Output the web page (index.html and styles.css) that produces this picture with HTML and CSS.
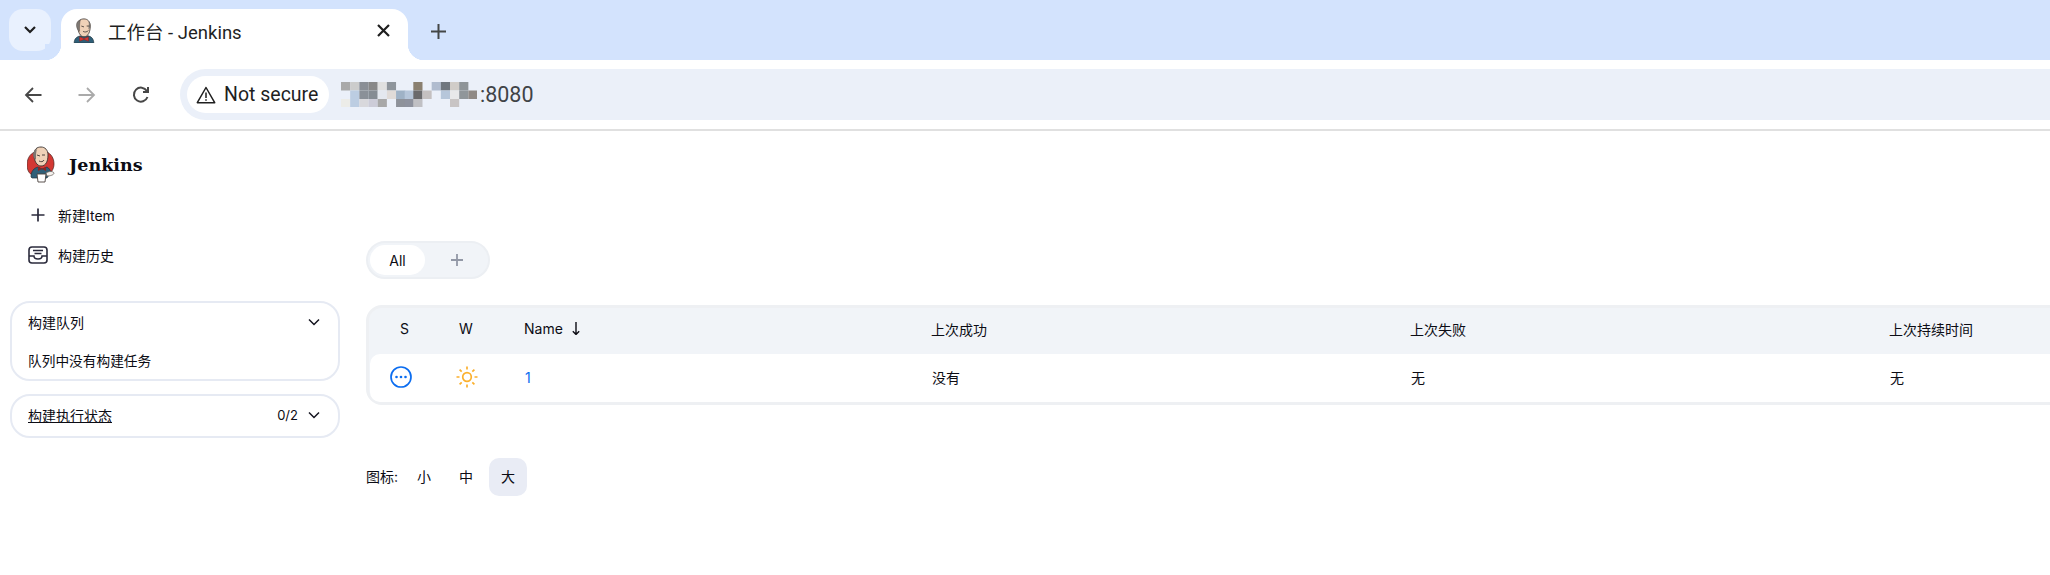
FILE: index.html
```html
<!DOCTYPE html>
<html lang="zh">
<head>
<meta charset="utf-8">
<title>工作台 - Jenkins</title>
<link rel="stylesheet" href="styles.css">
</head>
<body>
<svg class="defs" width="0" height="0" aria-hidden="true">
  <symbol id="butler-head" viewBox="0 0 24 28">
    <path d="M1 28c0-4 2-7 7-8l4 1 5-1c4 1 6 4 6 8z" fill="#2f5f78" stroke="#24343c" stroke-width=".7"/>
    <path d="M5 9C5 3 8 1 12 1c4 0 7 3 7 8 0 6-2 12-7 12-4 0-7-5-7-12z" fill="#f0d2b8" stroke="#3b3330" stroke-width=".9"/>
    <path d="M5 13C2 8 4 3 8 2c-1 3-1 8-1 13z" fill="#7d7873" stroke="#3b3330" stroke-width=".4"/>
    <path d="M19 11c1-3 0-6-2-7 1 3 0 6 0 9z" fill="#7d7873"/>
    <path d="M9 9l3 1M15 9l3 0M11 15c2 1 4 1 6-1" fill="none" stroke="#3b3330" stroke-width=".9"/>
    <path d="M7 21l5 2 5-2v5l-5-2-5 2z" fill="#d33833" stroke="#7b1e1a" stroke-width=".5"/>
  </symbol>
  <symbol id="butler-full" viewBox="0 0 28 37">
    <path d="M8 6C2 8 0 14 0 19c0 6 3 10 8 11h10c6-2 9-7 9-12C27 12 24 8 20 6z" fill="#d33833" stroke="#49231f" stroke-width=".7"/>
    <path d="M4 31c0-6 3-9 7-10l4 2 5-2c2 1 3 3 4 5l-4 6H5z" fill="#2f5f78" stroke="#24343c" stroke-width=".7"/>
    <path d="M7 9c0-6 3-8 7-8 4 0 7 3 7 8 0 6-2 11-7 11-4 0-7-5-7-11z" fill="#f0d2b8" stroke="#3b3330" stroke-width=".9"/>
    <path d="M7 12C5 8 7 4 10 3c-1 3-1 6-1 11z" fill="#7d7873"/>
    <path d="M10 9l3 1M15 9l3 0M12 15c2 1 4 1 5-1" fill="none" stroke="#3b3330" stroke-width=".9"/>
    <path d="M11 21l4 2 4-2v4l-4-2-4 2z" fill="#8e2522"/>
    <path d="M10 28h9l-1 8h-7z" fill="#fff" stroke="#49413d" stroke-width=".9"/>
    <path d="M19 27c3-2 7-2 8 0 0 2-4 3-7 3z" fill="#f4f1ee" stroke="#6b6560" stroke-width=".8"/>
  </symbol>
</svg>

<div class="strip">
  <button class="tab-search" aria-label="Search tabs">
    <svg width="14" height="10" viewBox="0 0 14 10"><path d="M2 2l5 5 5-5" fill="none" stroke="#1f1f1f" stroke-width="2.200"/></svg>
  </button>
  <div class="tab">
    <svg class="favicon" width="22" height="25"><use href="#butler-head"/></svg>
    <span class="tab-title">工作台 - Jenkins</span>
    <svg class="tab-close" width="13" height="13" viewBox="0 0 13 13"><path d="M1 1l11 11M12 1L1 12" stroke="#1f1f1f" stroke-width="2.200"/></svg>
  </div>
  <svg class="new-tab" width="15" height="15" viewBox="0 0 15 15"><path d="M7.500 0v15M0 7.500h15" stroke="#444746" stroke-width="2"/></svg>
</div>

<div class="toolbar">
  <svg class="nav-btn" width="18" height="18" viewBox="0 0 18 18"><path d="M17.500 9H2M9 2L2 9l7 7" fill="none" stroke="#474747" stroke-width="1.800"/></svg>
  <svg class="nav-btn" width="18" height="18" viewBox="0 0 18 18"><path d="M.5 9H16M9 2l7 7-7 7" fill="none" stroke="#aaaaaa" stroke-width="1.800"/></svg>
  <svg class="nav-btn" width="18" height="18" viewBox="0 0 18 18"><path d="M15.500 11a7 7 0 1 1-.6-6M16 1v5h-5" fill="none" stroke="#474747" stroke-width="2"/></svg>
  <div class="omnibox">
    <div class="security">
      <svg width="20" height="18" viewBox="0 0 20 18"><path d="M10 1.500L1.300 16.700h17.400z" fill="none" stroke="#1f1f1f" stroke-width="1.500" stroke-linejoin="round"/><path d="M10 6.500v5.500M10 13.200v1.600" stroke="#1f1f1f" stroke-width="1.500"/></svg>
      <span>Not secure</span>
    </div>
    <svg class="blur" width="136" height="25" viewBox="0 0 126 25" preserveAspectRatio="none" aria-hidden="true">
      <g>
        <rect x="0" y="0" width="8.500" height="8.500" fill="#a9a9a9"/><rect x="8.500" y="0" width="8.500" height="8.500" fill="#cccccc"/><rect x="17" y="0" width="8.500" height="8.500" fill="#8a8f96"/><rect x="25.500" y="0" width="8.500" height="8.500" fill="#888888"/><rect x="34" y="0" width="8.500" height="8.500" fill="#e0e0e0"/><rect x="42.500" y="0" width="8.500" height="8.500" fill="#8e959c"/><rect x="67" y="0" width="8.500" height="8.500" fill="#8a8070"/><rect x="84" y="0" width="8.500" height="8.500" fill="#b0bccf"/><rect x="92.500" y="0" width="8.500" height="8.500" fill="#70777f"/><rect x="101" y="0" width="8.500" height="8.500" fill="#d0ccc8"/><rect x="109.500" y="0" width="8.500" height="8.500" fill="#8e9498"/>
        <rect x="8.500" y="8.500" width="8.500" height="8.500" fill="#bccde2"/><rect x="17" y="8.500" width="8.500" height="8.500" fill="#8a9098"/><rect x="25.500" y="8.500" width="8.500" height="8.500" fill="#858c93"/><rect x="34" y="8.500" width="8.500" height="8.500" fill="#e4e8ef"/><rect x="42.500" y="8.500" width="8.500" height="8.500" fill="#e0dbd8"/><rect x="51" y="8.500" width="8.500" height="8.500" fill="#9fb2c6"/><rect x="59" y="8.500" width="8.500" height="8.500" fill="#b6c6da"/><rect x="67" y="8.500" width="8.500" height="8.500" fill="#6a6a6c"/><rect x="75.500" y="8.500" width="8.500" height="8.500" fill="#c4c0c0"/><rect x="92.500" y="8.500" width="8.500" height="8.500" fill="#b6c6da"/><rect x="101" y="8.500" width="8.500" height="8.500" fill="#e8e8ea"/><rect x="109.500" y="8.500" width="8.500" height="8.500" fill="#90969a"/><rect x="118" y="8.500" width="8" height="8.500" fill="#908a86"/>
        <rect x="0" y="17" width="8.500" height="8" fill="#ecece8"/><rect x="8.500" y="17" width="8.500" height="8" fill="#bccde2"/><rect x="17" y="17" width="8.500" height="8" fill="#d8d8dc"/><rect x="25.500" y="17" width="8.500" height="8" fill="#ccccd8"/><rect x="34" y="17" width="8.500" height="8" fill="#a8a8a8"/><rect x="51" y="17" width="8.500" height="8" fill="#8e929a"/><rect x="59" y="17" width="8.500" height="8" fill="#8e929e"/><rect x="67" y="17" width="8.500" height="8" fill="#c0c0c4"/><rect x="101" y="17" width="8.500" height="8" fill="#c8c4c4"/>
      </g>
    </svg>
    <span class="port">:8080</span>
  </div>
</div>

<div class="page">
  <aside class="sidebar">
    <div class="brand">
      <svg width="28" height="37"><use href="#butler-full"/></svg>
      <span class="brand-name">Jenkins</span>
    </div>
    <nav class="tasks">
      <a class="task">
        <span class="task-icon"><svg width="16" height="16" viewBox="0 0 16 16"><path d="M8 1.500v13M1.500 8h13" stroke="#2b2b3c" stroke-width="1.700"/></svg></span>
        <span>新建Item</span>
      </a>
      <a class="task">
        <span class="task-icon"><svg width="20" height="18" viewBox="0 0 20 18"><rect x="1" y="1" width="18" height="16" rx="3" fill="none" stroke="#2b2b3c" stroke-width="1.600"/><path d="M1 10h5c0 2 1.500 3 4 3s4-1 4-3h5M5 4.500h10M6.500 7.500h7" fill="none" stroke="#2b2b3c" stroke-width="1.500"/></svg></span>
        <span>构建历史</span>
      </a>
    </nav>
    <section class="pane pane-queue">
      <div class="pane-head">
        <span>构建队列</span>
        <svg class="chev" width="12" height="8" viewBox="0 0 12 8"><path d="M1 1.500l5 5 5-5" fill="none" stroke="#14141f" stroke-width="1.500"/></svg>
      </div>
      <div class="pane-body">队列中没有构建任务</div>
    </section>
    <section class="pane pane-exec">
      <div class="pane-head">
        <a class="pane-link">构建执行状态</a>
        <span class="count">0/2</span>
        <svg class="chev" width="12" height="8" viewBox="0 0 12 8"><path d="M1 1.500l5 5 5-5" fill="none" stroke="#14141f" stroke-width="1.500"/></svg>
      </div>
    </section>
  </aside>

  <main class="main">
    <div class="view-tabs">
      <span class="view-tab active">All</span>
      <span class="view-add"><svg width="12" height="12" viewBox="0 0 12 12"><path d="M6 0v12M0 6h12" stroke="#9298a6" stroke-width="1.800"/></svg></span>
    </div>

    <div class="jobs">
      <div class="jobs-head">
        <span class="cell center head-s">S</span>
        <span class="cell center">W</span>
        <span class="cell pad name-head">Name <svg class="arrow" width="8" height="13" viewBox="0 0 8 13"><path d="M4 0v12.500M.8 9.300L4 12.500l3.200-3.200" fill="none" stroke="#0c0c14" stroke-width="1.400"/></svg></span>
        <span class="cell pad">上次成功</span>
        <span class="cell pad">上次失败</span>
        <span class="cell pad">上次持续时间</span>
      </div>
      <div class="jobs-row">
        <span class="cell center">
          <svg class="status" width="22" height="22" viewBox="0 0 22 22"><circle cx="11" cy="11" r="10" fill="none" stroke="#0b6df0" stroke-width="1.700"/><circle cx="6.500" cy="11" r="1.300" fill="#0b6df0"/><circle cx="11" cy="11" r="1.300" fill="#0b6df0"/><circle cx="15.500" cy="11" r="1.300" fill="#0b6df0"/></svg>
        </span>
        <span class="cell center">
          <svg width="22" height="22" viewBox="0 0 22 22"><circle cx="11" cy="11" r="4.300" fill="none" stroke="#fbb02d" stroke-width="1.700"/><path d="M11 .5v3M11 18.500v3M.5 11h3M18.500 11h3M3.600 3.600l2.100 2.100M16.300 16.300l2.100 2.100M3.600 18.400l2.100-2.100M16.300 5.700l2.100-2.100" stroke="#fbb02d" stroke-width="1.700"/></svg>
        </span>
        <a class="cell pad job-link">1</a>
        <span class="cell pad">没有</span>
        <span class="cell pad">无</span>
        <span class="cell pad">无</span>
      </div>
    </div>

    <div class="sizes">
      <span class="sizes-label">图标:</span>
      <span class="size">小</span>
      <span class="size">中</span>
      <span class="size active">大</span>
    </div>
  </main>
</div>
</body>
</html>
```

FILE: styles.css
```css
* { box-sizing: border-box; }

html, body {
  margin: 0;
  height: 575px;
  overflow: hidden;
  background: #fff;
  font-family: "Inter", "Noto Sans CJK SC", sans-serif;
  color: #0c0c14;
}

.defs { position: absolute; }

/* browser chrome */
.strip {
  display: flex;
  align-items: flex-start;
  height: 60px;
  padding: 9px 0 0 9px;
  background: #d3e3fd;
}

.tab-search {
  display: flex;
  align-items: center;
  justify-content: center;
  flex: none;
  width: 42px;
  height: 42px;
  padding: 0;
  border: 0;
  border-radius: 14px;
  background: #e9f1fe;
}

.tab {
  position: relative;
  display: flex;
  align-items: center;
  flex: none;
  width: 347px;
  height: 51px;
  margin-left: 10px;
  padding: 0 18px 8px 12px;
  border-radius: 16px 16px 0 0;
  background: #fff;
  font-family: "Roboto", "Noto Sans CJK SC", sans-serif;
  font-size: 18.500px;
  color: #1f1f1f;
}

.tab::before,
.tab::after {
  content: "";
  position: absolute;
  bottom: 0;
  width: 16px;
  height: 16px;
}

.tab::before {
  left: -16px;
  background: radial-gradient(circle at 0 0, #d3e3fd 16px, #fff 16.500px);
}

.tab::after {
  right: -16px;
  background: radial-gradient(circle at 100% 0, #d3e3fd 16px, #fff 16.500px);
}

.favicon { flex: none; }

.tab-title {
  flex: 1;
  margin-left: 13px;
}

.new-tab { margin: 15px 0 0 23px; }

.toolbar {
  display: flex;
  align-items: center;
  height: 69px;
  padding: 0 0 0 24px;
  overflow: hidden;
  background: #fff;
}

.nav-btn {
  flex: none;
  margin-right: 36px;
}

.omnibox {
  display: flex;
  flex: 1;
  align-items: center;
  height: 51px;
  margin: 0 -40px 0 -6px;
  padding-left: 7px;
  border-radius: 26px;
  background: #ebf0f9;
  font-family: "Roboto", "Noto Sans CJK SC", sans-serif;
  font-size: 19.500px;
  color: #1f1f1f;
}

.security {
  display: flex;
  align-items: center;
  gap: 8px;
  width: 142px;
  height: 37px;
  padding-left: 9px;
  border-radius: 19px;
  background: #fff;
}

.blur { margin-left: 12px; }

.port {
  margin-left: 3px;
  font-size: 21.500px;
  color: #3f4347;
}

/* page */
.page {
  display: flex;
  height: 446px;
  border-top: 2px solid #e0e0e0;
}

.sidebar {
  flex: none;
  width: 350px;
  padding: 15px 10px 0;
  font-size: 14px;
}

.brand {
  display: flex;
  align-items: center;
  gap: 14px;
  height: 37px;
  padding-left: 17px;
}

.brand-name {
  font-family: "DejaVu Serif", serif;
  font-size: 17.500px;
  font-weight: 700;
}

.tasks { margin: 12px 0 26px; }

.task {
  display: flex;
  align-items: center;
  gap: 10px;
  height: 40px;
  padding-left: 17px;
}

.task-icon {
  display: flex;
  justify-content: center;
  width: 21px;
}

.pane {
  width: 330px;
  border: 2.500px solid #e6eaf3;
  border-radius: 20px;
}

.pane-queue {
  height: 80px;
  margin-bottom: 13px;
}

.pane-exec { height: 44px; }

.pane-head {
  display: flex;
  align-items: center;
  height: 38px;
  padding: 0 18px 0 16px;
}

.pane-head > span:first-child,
.pane-link { flex: 1; }

.pane-link { text-decoration: underline; }

.count {
  margin-right: 10px;
  font-size: 13px;
}

.pane-body {
  padding: 9px 16px 0;
  font-size: 13.700px;
}

.main {
  flex: 1;
  min-width: 0;
  padding: 110px 0 0 16px;
  overflow: hidden;
  font-size: 14px;
}

.view-tabs {
  display: flex;
  align-items: center;
  width: 124px;
  height: 38px;
  padding-left: 2px;
  border: 2px solid #eceff3;
  border-radius: 19px;
  background: #f1f4f8;
}

.view-tab {
  display: flex;
  align-items: center;
  justify-content: center;
  width: 56px;
  height: 30px;
  border-radius: 15px;
  background: #fff;
}

.view-add {
  display: flex;
  justify-content: center;
  width: 64px;
}

.jobs {
  width: 1760px;
  height: 100px;
  margin-top: 26px;
  border: 3px solid #eef0f3;
  border-radius: 16px;
  background: #f1f4f8;
}

.jobs-head,
.jobs-row {
  display: grid;
  grid-template-columns: 66px 62px 407px 479px 479px 1fr;
  align-items: center;
}

.jobs-head {
  height: 46px;
  padding-bottom: 5px;
}

.head-s { padding-left: 5px; }

.jobs-row {
  height: 48px;
  margin-left: 1px;
  padding-bottom: 2px;
  border-radius: 10px;
  background: #fff;
}

.cell.center {
  display: flex;
  justify-content: center;
}

.cell.pad { padding-left: 27px; }

.name-head {
  display: flex;
  align-items: center;
}

.status { margin-right: 5px; }

.arrow { margin-left: 9px; }

.job-link { color: #0b6df0; }

.sizes {
  display: flex;
  align-items: center;
  height: 38px;
  margin-top: 53px;
}

.sizes-label {
  width: 39px;
  padding-bottom: 2px;
}

.size {
  display: flex;
  align-items: center;
  justify-content: center;
  width: 38px;
  height: 38px;
  margin-right: 4px;
  padding-bottom: 2px;
  border-radius: 10px;
}

.size.active {
  background: #e9ecf5;
}
```
